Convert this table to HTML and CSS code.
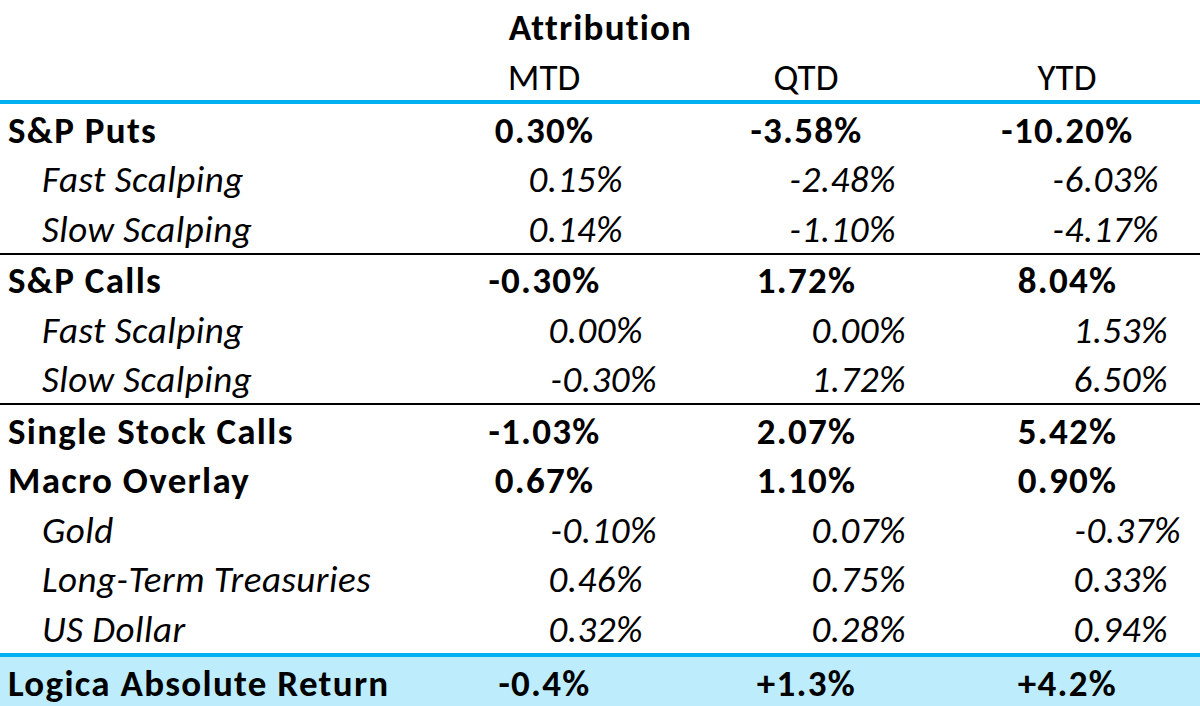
FILE: index.html
```html
<!DOCTYPE html>
<html>
<head>
<meta charset="utf-8">
<link rel="stylesheet" href="styles.css">
</head>
<body>
<div class="sheet">
  <div class="title">Attribution</div>
  <div class="row head">
    <div class="label"></div><div class="v">MTD</div><div class="v">QTD</div><div class="v">YTD</div>
  </div>
  <section class="group g-puts">
    <div class="row main"><div class="label">S&amp;P Puts</div><div class="v">0.30%</div><div class="v">-3.58%</div><div class="v">-10.20%</div></div>
    <div class="row sub puts"><div class="label">Fast Scalping</div><div class="v">0.15%</div><div class="v">-2.48%</div><div class="v">-6.03%</div></div>
    <div class="row sub puts last"><div class="label">Slow Scalping</div><div class="v">0.14%</div><div class="v">-1.10%</div><div class="v">-4.17%</div></div>
  </section>
  <section class="group g-calls">
    <div class="row main"><div class="label">S&amp;P Calls</div><div class="v">-0.30%</div><div class="v">1.72%</div><div class="v">8.04%</div></div>
    <div class="row sub"><div class="label">Fast Scalping</div><div class="v">0.00%</div><div class="v">0.00%</div><div class="v">1.53%</div></div>
    <div class="row sub last"><div class="label">Slow Scalping</div><div class="v neg">-0.30%</div><div class="v">1.72%</div><div class="v">6.50%</div></div>
  </section>
  <section class="group g-macro">
    <div class="row main"><div class="label">Single Stock Calls</div><div class="v">-1.03%</div><div class="v">2.07%</div><div class="v">5.42%</div></div>
    <div class="row main"><div class="label">Macro Overlay</div><div class="v">0.67%</div><div class="v">1.10%</div><div class="v">0.90%</div></div>
    <div class="row sub"><div class="label">Gold</div><div class="v neg">-0.10%</div><div class="v">0.07%</div><div class="v neg">-0.37%</div></div>
    <div class="row sub"><div class="label">Long-Term Treasuries</div><div class="v">0.46%</div><div class="v">0.75%</div><div class="v">0.33%</div></div>
    <div class="row sub last"><div class="label">US Dollar</div><div class="v">0.32%</div><div class="v">0.28%</div><div class="v">0.94%</div></div>
  </section>
  <div class="row main total"><div class="label">Logica Absolute Return</div><div class="v">-0.4%</div><div class="v">+1.3%</div><div class="v">+4.2%</div></div>
</div>
</body>
</html>
```

FILE: styles.css
```css
html, body {
  margin: 0;
  padding: 0;
  background: #ffffff;
}
body {
  font-family: Carlito, Lato, "Liberation Sans", sans-serif;
  color: #000000;
  width: 1200px;
  height: 706px;
  overflow: hidden;
}
.sheet {
  display: flex;
  flex-direction: column;
}
.title {
  box-sizing: border-box;
  height: 52px;
  padding-top: 2px;
  display: flex;
  align-items: center;
  justify-content: center;
  font-weight: 700;
  font-size: 37px;
  letter-spacing: 1.2px;
  padding-left: 1px;
}
.row {
  box-sizing: border-box;
  display: grid;
  grid-template-columns: 413px 262px 262px 260px;
  align-items: center;
  height: 49.5px;
  padding-top: 3px;
  font-size: 37px;
}
.row.head {
  height: 52px;
  border-bottom: 4px solid #00b0f0;
}
.row .v {
  text-align: center;
  white-space: nowrap;
}
.row.main {
  font-weight: 700;
  letter-spacing: 1.3px;
}
.row.main .v {
  padding-left: 1px;
}
.row .label {
  padding-left: 8px;
  white-space: nowrap;
}
.row.sub {
  font-style: italic;
  letter-spacing: 0.5px;
}
.row.sub .label {
  padding-left: 42px;
}
.row.sub .v {
  text-align: right;
}
.row.sub .v:nth-child(2) { padding-right: 32px; }
.row.sub .v:nth-child(3) { padding-right: 31px; }
.row.sub .v:nth-child(4) { padding-right: 29px; }
.row.sub .v.neg:nth-child(2) { padding-right: 18px; }
.row.sub .v.neg:nth-child(4) { padding-right: 16px; }
.row.sub.puts .v:nth-child(2) { padding-right: 52px; }
.row.sub.puts .v:nth-child(3) { padding-right: 41px; }
.row.sub.puts .v:nth-child(4) { padding-right: 38px; }
.group {
  display: flex;
  flex-direction: column;
}
.g-puts, .g-calls {
  border-bottom: 2px solid #000000;
}
.g-macro {
  border-bottom: 4px solid #00b0f0;
}
.row.total {
  height: 50px;
  background: #bdedfc;
}
```
